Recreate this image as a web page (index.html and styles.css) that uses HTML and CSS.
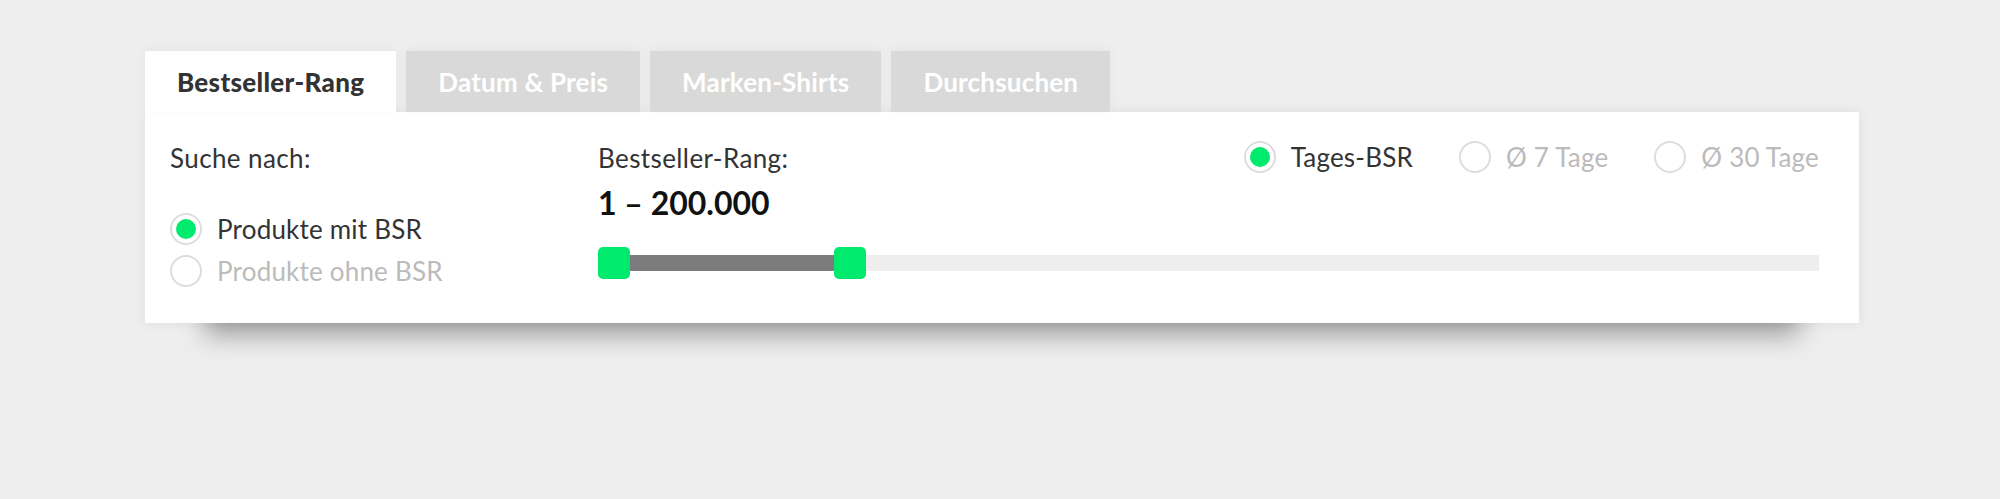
FILE: index.html
```html
<!DOCTYPE html>
<html lang="de">
<head>
<meta charset="utf-8">
<title>BSR Filter</title>
<link rel="stylesheet" href="styles.css">
</head>
<body>
<div class="wrap">
  <div class="tabs">
    <div class="tab active">Bestseller-Rang</div>
    <div class="tab">Datum &amp; Preis</div>
    <div class="tab">Marken-Shirts</div>
    <div class="tab">Durchsuchen</div>
  </div>
  <div class="panel">
    <div class="col-left">
      <div class="label">Suche nach:</div>
      <div class="radios">
        <label class="radio checked"><span class="dot"></span>Produkte mit BSR</label>
        <label class="radio off"><span class="dot"></span>Produkte ohne BSR</label>
      </div>
    </div>
    <div class="col-main">
      <div class="head">
        <div class="label">Bestseller-Rang:</div>
        <div class="modes">
          <label class="radio checked"><span class="dot"></span>Tages-BSR</label>
          <label class="radio off"><span class="dot"></span>Ø 7 Tage</label>
          <label class="radio off"><span class="dot"></span>Ø 30 Tage</label>
        </div>
      </div>
      <div class="value">1 – 200.000</div>
      <div class="slider">
        <div class="track">
          <div class="fill" style="width: 236px"></div>
        </div>
        <div class="handle h1"></div>
        <div class="handle h2" style="left: 236px"></div>
      </div>
    </div>
  </div>
</div>
</body>
</html>
```

FILE: styles.css
```css
* { box-sizing: border-box; }
html, body { margin: 0; }
body {
  background: #eeeeee;
  font-family: "Lato", "Noto Sans", sans-serif;
  color: #333333;
  width: 2000px;
  height: 499px;
  overflow: hidden;
}
.wrap {
  width: 1714px;
  margin-left: 145px;
  padding-top: 51px;
}
.tabs {
  display: flex;
  gap: 10px;
  position: relative;
  z-index: 1;
}
.tab {
  height: 61px;
  padding: 0 32px;
  display: flex;
  align-items: center;
  background: #d9d9d9;
  color: #ffffff;
  font-size: 26px;
  font-weight: 700;
  letter-spacing: 0.2px;
  box-shadow: 0 -2px 10px rgba(0,0,0,0.04);
}
.tab.active {
  background: #ffffff;
  color: #333333;
  font-weight: 900;
  letter-spacing: 0.3px;
}
.panel {
  background: #ffffff;
  height: 211px;
  display: grid;
  grid-template-columns: 428px 1fr;
  padding: 0 40px 0 25px;
  box-shadow: 0 72px 24px -60px rgba(0,0,0,0.34), 0 0 12px rgba(0,0,0,0.07);
}
.label {
  font-size: 26px;
  line-height: 30px;
  color: #333333;
  letter-spacing: 0.4px;
}
.col-left { padding-top: 31px; }
.radios {
  margin-top: 40px;
  display: flex;
  flex-direction: column;
  gap: 10px;
}
.radio {
  display: flex;
  align-items: center;
  gap: 15px;
  font-size: 26px;
  line-height: 32px;
  color: #333333;
  letter-spacing: 0.2px;
}
.radio.off { color: #bbbbbb; }
.dot {
  width: 32px;
  height: 32px;
  border-radius: 50%;
  border: 2px solid #dddddd;
  display: flex;
  align-items: center;
  justify-content: center;
  flex: none;
}
.radio.checked .dot::after {
  content: "";
  width: 20px;
  height: 20px;
  border-radius: 50%;
  background: #00ea6e;
}
.col-main { padding-top: 29px; }
.head {
  display: flex;
  justify-content: space-between;
  align-items: center;
}
.head .label { padding-top: 2px; }
.modes {
  display: flex;
  gap: 46px;
}
.value {
  margin-top: 12px;
  font-size: 32px;
  font-weight: 700;
  color: #111111;
  line-height: 36px;
}
.slider {
  position: relative;
  height: 32px;
  margin-top: 26px;
}
.track {
  position: absolute;
  left: 0;
  right: 0;
  top: 8px;
  height: 16px;
  background: #eeeeee;
}
.fill {
  position: absolute;
  left: 16px;
  top: 0;
  bottom: 0;
  background: #7b7b7b;
}
.handle {
  position: absolute;
  top: 0;
  left: 0;
  width: 32px;
  height: 32px;
  border-radius: 5px;
  background: #00ea6e;
}
```
